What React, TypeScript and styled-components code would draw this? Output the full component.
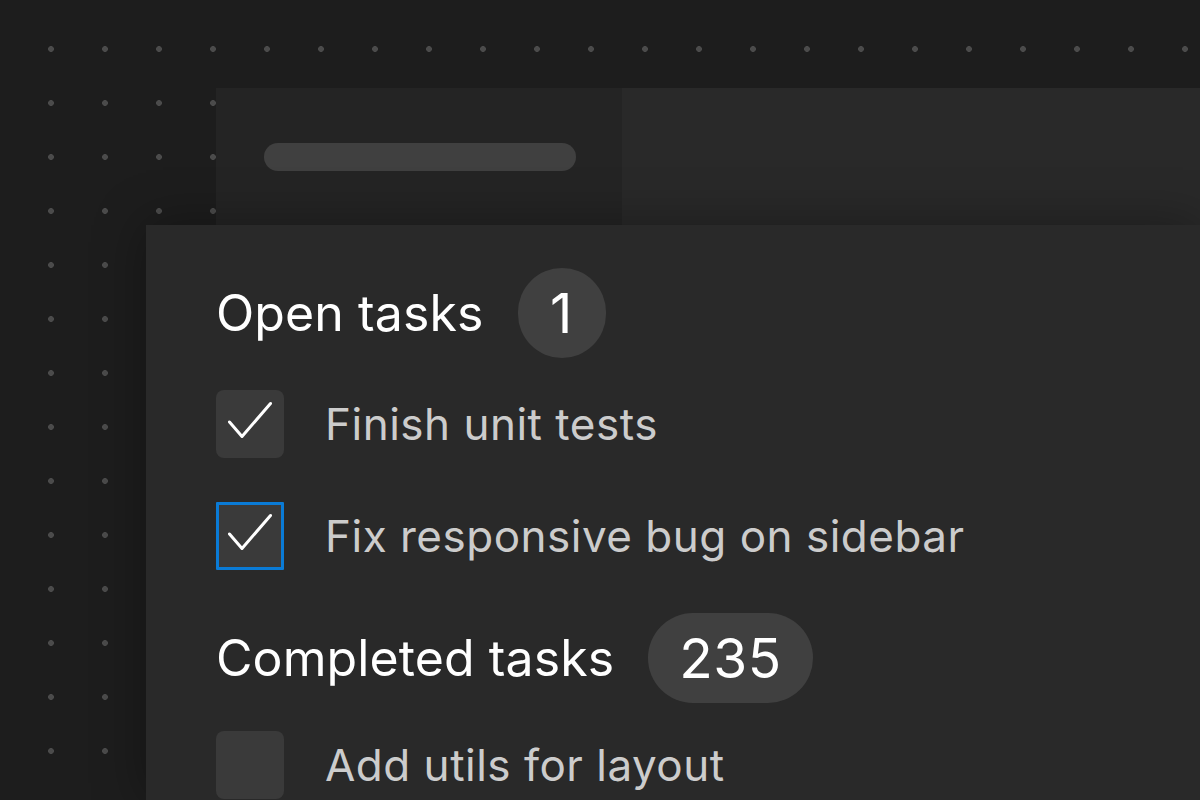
import React from "react"
import styled, { createGlobalStyle } from "styled-components"

const GlobalStyle = createGlobalStyle`
  html, body {
    margin: 0;
    padding: 0;
    height: 100%;
    overflow: hidden;
  }
  body {
    background-color: #1d1d1d;
    background-image: radial-gradient(circle, #4b4b4b 2.6px, transparent 3.2px);
    background-size: 54px 54px;
    background-position: 24px 22px;
    font-family: Inter, "Noto Sans", sans-serif;
  }
`

interface Task {
  label: string
  checked: boolean
  focused?: boolean
}

const openTasks: Task[] = [
  { label: "Finish unit tests", checked: true },
  { label: "Fix responsive bug on sidebar", checked: true, focused: true },
]

const completedTasks: Task[] = [{ label: "Add utils for layout", checked: false }]

const Check = () => (
  <svg width="68" height="68" viewBox="0 0 68 68" fill="none">
    <path d="M13.5 32L26 46.5L54.5 13.5" stroke="#ffffff" strokeWidth="3" strokeLinecap="round" strokeLinejoin="round" />
  </svg>
)

const TaskRow: React.FC<{ task: Task }> = ({ task }) => (
  <S.Row>
    <S.Box $focused={task.focused}>{task.checked && <Check />}</S.Box>
    <S.Label>{task.label}</S.Label>
  </S.Row>
)

const App: React.FC = () => (
  <>
    <GlobalStyle />
    <S.Stage>
      <S.BackPanel>
        <S.Sidebar>
          <S.Pill />
        </S.Sidebar>
        <S.Content />
      </S.BackPanel>
      <S.FrontPanel>
        <S.Heading>
          <S.Title>Open tasks</S.Title>
          <S.Count>1</S.Count>
        </S.Heading>
        <S.List>
          {openTasks.map((t) => (
            <TaskRow key={t.label} task={t} />
          ))}
        </S.List>
        <S.Heading $second>
          <S.Title>Completed tasks</S.Title>
          <S.Count $wide>235</S.Count>
        </S.Heading>
        <S.List $last>
          {completedTasks.map((t) => (
            <TaskRow key={t.label} task={t} />
          ))}
        </S.List>
      </S.FrontPanel>
    </S.Stage>
  </>
)

const S = {
  Stage: styled.div`
    height: 800px;
    padding-top: 88px;
    box-sizing: border-box;
    display: flex;
    flex-direction: column;
  `,
  BackPanel: styled.div`
    margin-left: 216px;
    height: 137px;
    display: flex;
    flex-shrink: 0;
  `,
  Sidebar: styled.div`
    width: 406px;
    background: #242424;
    padding: 55px 0 0 48px;
    box-sizing: border-box;
  `,
  Pill: styled.div`
    width: 312px;
    height: 28px;
    border-radius: 14px;
    background: #404040;
  `,
  Content: styled.div`
    flex: 1;
    background: #292929;
  `,
  FrontPanel: styled.div`
    flex: 1;
    margin-left: 146px;
    background: #292929;
    box-shadow: 0 0 48px rgba(0, 0, 0, 0.35);
    padding: 43px 0 0 70px;
    box-sizing: border-box;
    position: relative;
    z-index: 1;
  `,
  Heading: styled.div<{ $second?: boolean }>`
    display: flex;
    align-items: center;
    gap: 34px;
    height: 90px;
    margin-top: ${(p) => (p.$second ? "43px" : "0")};
  `,
  Title: styled.h2`
    margin: 0;
    font-size: 50px;
    font-weight: 400;
    color: #ffffff;
    letter-spacing: 0.1px;
  `,
  Count: styled.span<{ $wide?: boolean }>`
    display: inline-flex;
    align-items: center;
    justify-content: center;
    height: 90px;
    min-width: 88px;
    padding: 0 ${(p) => (p.$wide ? "31px" : "0")};
    box-sizing: border-box;
    border-radius: 45px;
    background: #404040;
    color: #ffffff;
    font-size: 55px;
    font-weight: 400;
    letter-spacing: 0.5px;
  `,
  List: styled.div<{ $last?: boolean }>`
    display: flex;
    flex-direction: column;
    gap: 44px;
    margin-top: ${(p) => (p.$last ? "28px" : "32px")};
  `,
  Row: styled.div`
    display: flex;
    align-items: center;
    gap: 41px;
  `,
  Box: styled.div<{ $focused?: boolean }>`
    width: 68px;
    height: 68px;
    flex-shrink: 0;
    box-sizing: border-box;
    border-radius: ${(p) => (p.$focused ? "1px" : "8px")};
    background: #3a3a3a;
    border: ${(p) => (p.$focused ? "3px solid #0a7bd6" : "none")};
    display: flex;
    align-items: center;
    justify-content: center;
    svg {
      margin: ${(p) => (p.$focused ? "-3px" : "0")};
    }
  `,
  Label: styled.span`
    font-size: 44px;
    font-weight: 400;
    color: #cccccc;
    letter-spacing: 0.5px;
  `,
}

export default App
